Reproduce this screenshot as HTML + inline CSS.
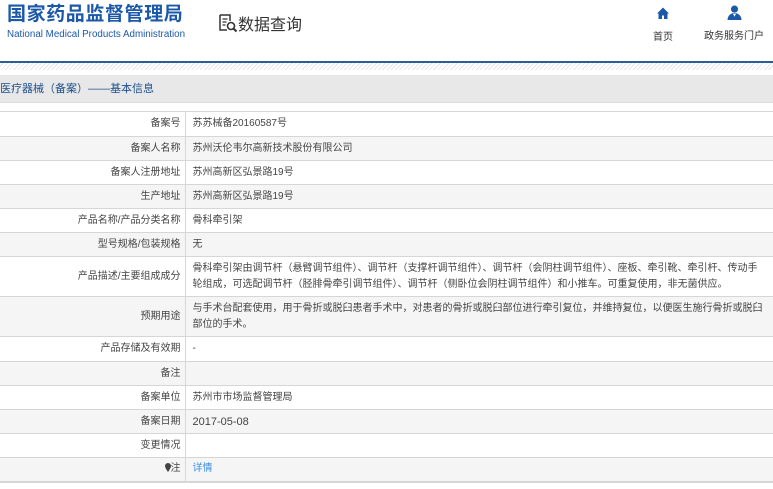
<!DOCTYPE html>
<html><head><meta charset="utf-8"><style>
*{margin:0;padding:0;box-sizing:border-box}
body{width:773px;height:489px;overflow:hidden;background:#fff;font-family:"Liberation Sans","Noto Sans CJK SC",sans-serif;color:#444;position:relative}
.t1{position:absolute;left:7px;top:2px;font-size:19px;line-height:26px;font-weight:bold;color:#1c58a8;letter-spacing:0.6px;white-space:nowrap}
.t2{position:absolute;left:7px;top:29px;font-size:9.8px;color:#1c58a8;white-space:nowrap}
.q{position:absolute;left:218px;top:11px;font-size:16px;color:#333;white-space:nowrap}
.q svg{vertical-align:-3px}
.nav{position:absolute;font-size:10px;color:#333;text-align:center}
.line{position:absolute;left:0;top:61px;width:773px;height:2px;background:#2a5d9c}
.hatch{position:absolute;left:0;top:63px;width:773px;height:7px;background:repeating-linear-gradient(135deg,#fff 0 2px,#e6e6e6 2px 3px)}
.bar{position:absolute;left:0;top:75px;width:773px;height:28px;background:#e8e8e8;border-bottom:1px solid #ddd;font-size:11px;color:#1c4f8f;line-height:28px}
table{position:absolute;left:0;top:111px;width:773px;border-collapse:collapse;font-size:10px}
td{border-top:1px solid #d6d6d6;padding:0 6px;line-height:16px;vertical-align:middle}
td.l{width:185px;text-align:right;border-right:1px solid #d6d6d6;padding-right:4px;color:#444}
td.v{padding-left:7px;color:#444}
tr.g td{background:#f5f5f5}
tr:last-child td{border-bottom:2px solid #d6d6d6}
</style></head><body>
<div class="t1">国家药品监督管理局</div>
<div class="t2">National Medical Products Administration</div>
<div class="q"><svg width="20" height="20" viewBox="0 0 20 20"><path d="M2 2h10v6M2 2v15h7" fill="none" stroke="#333" stroke-width="1.5"/><path d="M4.5 6h5M4.5 9h4M4.5 12h3" stroke="#333" stroke-width="1.3"/><circle cx="13" cy="13" r="3.5" fill="none" stroke="#333" stroke-width="1.6"/><path d="M15.5 15.5l3 3" stroke="#333" stroke-width="2"/></svg>数据查询</div>
<div class="nav" style="left:650px;width:26px;top:7px"><svg width="12" height="12" viewBox="0 0 12 12"><path d="M6 0.5L0 6.5H1.5v5.5h3.5V8.5h2V12h3.5V6.5H12z" fill="#1c58a8"/></svg><div style="margin-top:6px">首页</div></div>
<div class="nav" style="left:703px;width:62px;top:5px"><svg width="15" height="15" viewBox="0 0 14 14"><circle cx="7" cy="3.8" r="3.3" fill="#1c58a8"/><path d="M0.5 14c0-4 3-6.5 6.5-6.5s6.5 2.5 6.5 6.5z" fill="#1c58a8"/><path d="M5.5 8l1.5 3 1.5-3z" fill="#fff"/></svg><div style="margin-top:4px">政务服务门户</div></div>
<div class="line"></div><div class="hatch"></div>
<div class="bar">医疗器械（备案）——基本信息</div>
<table>
<tr style="height:25px"><td class="l">备案号</td><td class="v">苏苏械备20160587号</td></tr>
<tr class="g" style="height:24px"><td class="l">备案人名称</td><td class="v">苏州沃伦韦尔高新技术股份有限公司</td></tr>
<tr style="height:24px"><td class="l">备案人注册地址</td><td class="v">苏州高新区弘景路19号</td></tr>
<tr class="g" style="height:24px"><td class="l">生产地址</td><td class="v">苏州高新区弘景路19号</td></tr>
<tr style="height:24px"><td class="l">产品名称/产品分类名称</td><td class="v">骨科牵引架</td></tr>
<tr class="g" style="height:24px"><td class="l">型号规格/包装规格</td><td class="v">无</td></tr>
<tr style="height:40px"><td class="l">产品描述/主要组成成分</td><td class="v">骨科牵引架由调节杆（悬臂调节组件）、调节杆（支撑杆调节组件）、调节杆（会阴柱调节组件）、座板、牵引靴、牵引杆、传动手轮组成，可选配调节杆（胫腓骨牵引调节组件）、调节杆（侧卧位会阴柱调节组件）和小推车。可重复使用，非无菌供应。</td></tr>
<tr class="g" style="height:40px"><td class="l">预期用途</td><td class="v">与手术台配套使用，用于骨折或脱臼患者手术中，对患者的骨折或脱臼部位进行牵引复位，并维持复位，以便医生施行骨折或脱臼部位的手术。</td></tr>
<tr style="height:25px"><td class="l">产品存储及有效期</td><td class="v">-</td></tr>
<tr class="g" style="height:24px"><td class="l">备注</td><td class="v"></td></tr>
<tr style="height:24px"><td class="l">备案单位</td><td class="v">苏州市市场监督管理局</td></tr>
<tr class="g" style="height:24px"><td class="l">备案日期</td><td class="v" style="font-size:11px">2017-05-08</td></tr>
<tr style="height:24px"><td class="l">变更情况</td><td class="v"></td></tr>
<tr class="g" style="height:24px"><td class="l"><svg width="6" height="9" viewBox="0 0 6 9" style="vertical-align:-1px"><path d="M3 0a3 3 0 0 1 3 3c0 2-3 6-3 6S0 5 0 3a3 3 0 0 1 3-3z" fill="#444"/></svg>注</td><td class="v" style="color:#3a8ee6">详情</td></tr>
</table>
</body></html>
